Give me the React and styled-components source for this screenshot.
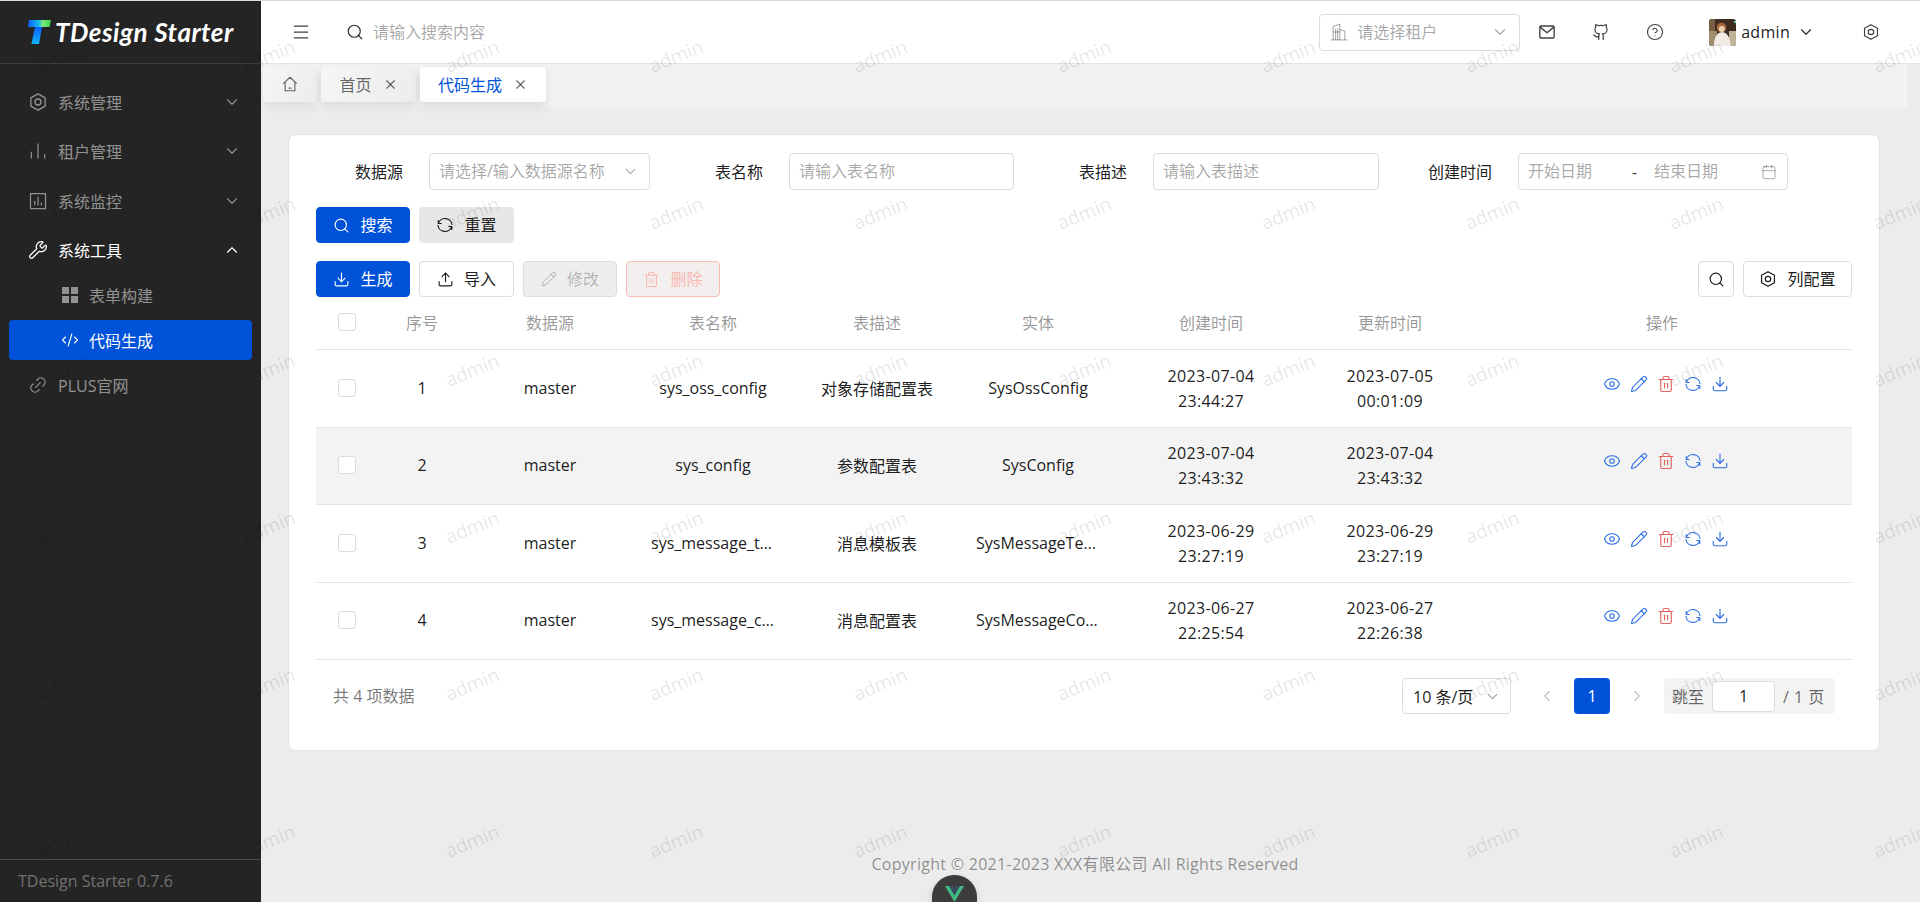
import React from 'react';
import styled, { createGlobalStyle } from 'styled-components';
import {
  Menu as MenuIcon, Search, ChevronDown, ChevronUp, ChevronLeft, ChevronRight, Github, CircleHelp, X,
  Download, Upload, Pencil, Trash2, Eye, CodeXml, Link2, Wrench, Calendar,
} from 'lucide-react';

const GlobalStyle = createGlobalStyle`
  html, body { margin: 0; padding: 0; background: #ececec; }
  body { font-family: "Open Sans", "Noto Sans CJK SC", sans-serif; font-size: 16px; color: rgba(0,0,0,.9); }
  * { box-sizing: border-box; }
`;

const Page = styled.div`
  position: relative; width: 1920px; height: 902px; overflow: hidden; background: #ececec;
  border-top: 1px solid #d9d9d9; display: flex;
`;

const Watermarks = styled.div`
  position: absolute; top: -24px; left: -38px; z-index: 20; pointer-events: none;
  display: grid; grid-template-columns: repeat(10, 204px); grid-auto-rows: 157px;
`;
const Mark = styled.span`
  display: flex; align-items: center; justify-content: center;
  font-size: 19px; color: rgba(0,0,0,.11); transform: rotate(-22deg);
`;

/* sidebar */
const Sidebar = styled.aside`
  width: 261px; flex: none; background: #242424; display: flex; flex-direction: column; color: rgba(255,255,255,.5);
`;
const LogoBar = styled.div`
  height: 63px; flex: none; border-bottom: 1px solid #3d3d3d; display: flex; align-items: center; padding: 0 0 0 27px; gap: 4px;
`;
const LogoText = styled.span`
  font-family: "Lato", sans-serif; font-style: italic; font-weight: 700; font-size: 26px; color: #fff; white-space: nowrap; letter-spacing: .5px;
`;
const Nav = styled.nav`
  flex: 1; padding-top: 12.8px; display: flex; flex-direction: column;
`;
const TopItem = styled.div`
  height: 49.6px; flex: none; display: flex; align-items: center; padding: 0 20px 0 28px; gap: 10px; font-size: 16px;
  color: ${p => (p.$open ? '#fff' : 'rgba(255,255,255,.5)')};
  span { flex: 1; }
`;
const SubItem = styled.div`
  height: 40px; flex: none; margin: ${p => (p.$active ? '5px 9px 0' : '0 9px')}; padding-left: 52px; display: flex; align-items: center; gap: 10px;
  border-radius: 4px; background: ${p => (p.$active ? '#0052d9' : 'transparent')};
  color: ${p => (p.$active ? '#fff' : 'rgba(255,255,255,.5)')};
`;
const SideFooter = styled.div`
  height: 43px; flex: none; border-top: 1px solid #4a4a4a; display: flex; align-items: center; padding-left: 18px; font-size: 16px; color: rgba(255,255,255,.36);
`;

/* main column */
const Main = styled.main`
  flex: 1; min-width: 0; display: flex; flex-direction: column;
`;
const Header = styled.header`
  height: 63px; flex: none; background: #fff; border-bottom: 1px solid #e4e4e4; display: flex; align-items: center; padding: 0 22px 0 18px;
`;
const IconButton = styled.div`
  width: 54px; height: 36px; flex: none; display: flex; align-items: center; justify-content: center; color: rgba(0,0,0,.75);
`;
const MenuToggle = styled(IconButton)`
  width: 44px;
`;
const SettingsButton = styled(IconButton)`
  margin-left: 29px;
`;
const SearchBox = styled.div`
  display: flex; align-items: center; gap: 9px; margin-left: 23px; flex: 1; color: rgba(0,0,0,.8);
`;
const PlainInput = styled.input`
  border: 0; outline: 0; background: transparent; padding: 0; flex: ${p => (p.$w ? 'none' : 1)}; width: ${p => (p.$w ? `${p.$w}px` : 'auto')}; min-width: 0; font: inherit; font-size: 16px; color: rgba(0,0,0,.9);
  &::placeholder { color: rgba(0,0,0,.36); opacity: 1; }
`;
const Field = styled.div`
  width: ${p => p.$w}px; height: 37px; flex: none; display: flex; align-items: center; gap: 8px; padding: 0 10px 0 9px;
  border: 1px solid #dcdcdc; border-radius: 4px; background: #fff; color: rgba(0,0,0,.36);
`;
const Dash = styled.span`
  width: 14px; flex: none; color: rgba(0,0,0,.8);
`;
const User = styled.div`
  display: flex; align-items: center; margin-left: 27px; gap: 5px; font-size: 16px; letter-spacing: .3px; color: rgba(0,0,0,.9);
`;
const Chevron = styled.span`
  display: flex; margin-left: 2px; color: rgba(0,0,0,.8);
`;

const TabBar = styled.div`
  height: 43px; flex: none; margin-right: 13px; background: #f2f2f2; display: flex; align-items: flex-start; padding: 3px 0 0 2px; gap: 4px;
`;
const Tab = styled.div`
  height: 35px; width: ${p => p.$w}px; padding-bottom: 1px; display: flex; align-items: center; justify-content: center; gap: 11px; border-radius: 3px;
  background: ${p => (p.$active ? '#fff' : 'linear-gradient(120deg, #f6f6f6, #ececec)')};
  color: ${p => (p.$active ? '#0052d9' : 'rgba(0,0,0,.6)')};
  box-shadow: 0 4px 9px rgba(0,0,0,.1);
  svg.close { color: rgba(0,0,0,.6); }
`;

const Content = styled.div`
  flex: 1; padding: 27px 40px 0 27px; display: flex; flex-direction: column;
`;
const Card = styled.section`
  height: 617px; flex: none; background: #fff; border: 1px solid #e3e3e3; border-radius: 8px; padding: 18px 27px 0;
`;
const FormRow = styled.div`
  display: flex; gap: 26px;
  input { padding-bottom: 2px; }
`;
const FormItem = styled.div`
  display: flex; align-items: center;
`;
const Label = styled.label`
  width: 113px; padding: 0 26px 2px 0; text-align: right; font-size: 16px; color: rgba(0,0,0,.9);
`;
const Toolbar = styled.div`
  display: flex; gap: 9px; margin-top: ${p => p.$mt}px;
`;
const Spacer = styled.div`flex: 1;`;
const variants = {
  primary: 'background:#0052d9;border-color:#0052d9;color:#fff;',
  gray: 'background:#e7e7e7;border-color:#e7e7e7;color:rgba(0,0,0,.9);',
  outline: 'background:#fff;border-color:#dcdcdc;color:rgba(0,0,0,.9);',
  disabled: 'background:#eee;border-color:#dcdcdc;color:rgba(0,0,0,.26);',
  dangerOff: 'background:#f3efee;border-color:#fbbcb6;color:#f9b7b1;',
};
const Button = styled.button`
  height: 36px; width: ${p => p.$w || 94}px; flex: none; border: 1px solid; border-radius: 4px; padding: 0 0 2px; display: flex; align-items: center; justify-content: center; gap: 10px;
  font: inherit; font-size: 16px;
  svg { position: relative; top: 1px; }
  ${p => variants[p.$v]}
`;

const columns = '62px 88px 168px 158px 170px 152px 194px 164px 1fr';
const Grid = styled.div`
  display: grid; grid-template-columns: ${columns}; align-items: center; border-bottom: 1px solid #e3e3e3; text-align: center;
`;
const HeadRow = styled(Grid)`
  height: 53px; padding-bottom: 2px; color: rgba(0,0,0,.42); font-size: 16px;
`;
const Row = styled(Grid)`
  height: 77.5px; padding-bottom: 1px; background: ${p => (p.$striped ? '#f3f3f3' : '#fff')}; font-size: 16px;
`;
const Cell = styled.div`
  min-width: 0; padding: 0 ${p => p.$pad || 0}px; overflow: hidden; white-space: nowrap; text-overflow: ellipsis;
`;
const DateCell = styled.div`
  line-height: 25px; white-space: pre-line; padding-top: 2px; letter-spacing: .35px;
`;
const CheckBox = styled.span`
  display: block; width: 18px; height: 18px; margin: 0 auto; border: 1px solid #dcdcdc; border-radius: 3px; background: #fff;
`;
const Actions = styled.div`
  display: flex; justify-content: center; gap: 9px; padding: 0 0 8px 8px; color: #2f72e4;
`;
const DangerIcon = styled.span`
  display: flex; color: #e0625c;
`;
const Pager = styled.div`
  display: flex; align-items: center; gap: 9px; padding: 18px 17px 0;
`;
const Total = styled.span`
  flex: 1; padding-bottom: 2px; color: rgba(0,0,0,.55); font-size: 16px;
`;
const SizeSelect = styled.div`
  width: 109px; height: 36px; margin-right: 9px; display: flex; align-items: center; justify-content: space-between; padding: 0 9px 0 10px;
  border: 1px solid #dcdcdc; border-radius: 4px; font-size: 16px; white-space: nowrap;
  svg { color: rgba(0,0,0,.4); }
`;
const PageArrow = styled.span`
  width: 36px; height: 36px; display: flex; align-items: center; justify-content: center; color: rgba(0,0,0,.26);
`;
const PageNum = styled.span`
  width: 36px; height: 36px; display: flex; align-items: center; justify-content: center; background: #0052d9; color: #fff; border-radius: 4px;
`;
const Jump = styled.div`
  width: 171px; height: 36px; display: flex; align-items: center; gap: 8px; padding: 0 0 0 8px; background: #f3f3f3; border-radius: 4px; color: rgba(0,0,0,.6); white-space: nowrap; word-spacing: 1px;
`;
const JumpInput = styled.input`
  width: 63px; height: 31px; flex: none; border: 1px solid #dcdcdc; border-radius: 4px; background: #fff; outline: 0; text-align: center; font: inherit; color: rgba(0,0,0,.9); padding: 0;
`;
const Copyright = styled.footer`
  margin-top: 102px; text-align: center; color: rgba(0,0,0,.42); font-size: 16px; line-height: 22px; padding-left: 2px; letter-spacing: .28px;
`;
const DevTools = styled.div`
  position: absolute; left: 932px; top: 874px; width: 45px; height: 60px; border-radius: 22px; background: #3c3c3c; z-index: 30;
  display: flex; justify-content: center; padding-top: 11px; box-shadow: 0 2px 6px rgba(0,0,0,.15);
`;

/* drawings */
const Svg = ({ s = 18, children, sw = 1.6 }) => (
  <svg width={s} height={s} viewBox="0 0 24 24" fill="none" stroke="currentColor" strokeWidth={sw} strokeLinecap="butt" strokeLinejoin="round" style={{ flex: 'none' }}>{children}</svg>
);
const Hex = ({ s = 18, sw = 1.6 }) => (
  <Svg s={s} sw={sw}><path d="M12 2.2 20.6 7.1v9.8L12 21.8 3.4 16.9V7.1Z" /><circle cx="12" cy="12" r="3.6" /></Svg>
);
const Bars = () => (
  <Svg s={20} sw={1.5}><path d="M4 13v8M12 3v18M20 16v5" /></Svg>
);
const Monitor = () => (
  <Svg s={20} sw={1.5}><rect x="3" y="3" width="18" height="18" /><path d="M8 17v-5M12 17V7M16 17v-3" /></Svg>
);
const Modules = () => (
  <svg width="18" height="18" viewBox="0 0 18 18" fill="currentColor" style={{ flex: 'none' }}>
    <rect x="1" y="1" width="7" height="7" /><rect x="10" y="1" width="7" height="7" /><rect x="1" y="10" width="7" height="7" /><rect x="10" y="10" width="7" height="7" />
  </svg>
);
const Building = () => (
  <Svg s={20} sw={1.2}><path d="M2 21.500h20M5 21.500V5.500L13 2.500v19M13 9l6 2v10.500M8 8v13.500M10.500 8v13.500" /><path d="M5 12h8" /></Svg>
);
const Envelope = () => (
  <Svg s={18} sw={1.8}><rect x="2.500" y="4" width="19" height="16" rx="1.500" /><path d="M3 5.500 12 13l9-7.500" /></Svg>
);
const HomeIcon = () => (
  <Svg s={18} sw={1.5}><path d="M3 11.500 12 3l9 8.500M5.500 9.500V21h13V9.500M10 17.500h4" /></Svg>
);
const Refresh = ({ s = 18, sw = 1.5 }) => (
  <Svg s={s} sw={sw}>
    <path d="M3 5.500V10h4.500M3 10a9.500 9.500 0 0 1 18.500 2" />
    <path d="M21 18.500V14h-4.500M21 14a9.500 9.500 0 0 1-18.500-2" />
  </Svg>
);
const Logo = () => (
  <svg width="24" height="26" viewBox="0 0 24 26" style={{ flex: 'none' }}>
    <defs>
      <linearGradient id="lg1" x1="0" y1="0" x2="1" y2="0"><stop offset="0" stopColor="#0a5cff" /><stop offset=".45" stopColor="#12b8f0" /><stop offset=".65" stopColor="#7fe87c" /><stop offset="1" stopColor="#35d24a" /></linearGradient>
      <linearGradient id="lg2" x1="0" y1="0" x2="0" y2="1"><stop offset="0" stopColor="#0a5cff" /><stop offset="1" stopColor="#10b8ff" /></linearGradient>
    </defs>
    <path d="M2 1h22l-1.400 7H1Z" fill="url(#lg1)" />
    <path d="M8 8h7l-3 17H4.400Z" fill="url(#lg2)" />
  </svg>
);
const Avatar = () => (
  <svg width="27" height="27" viewBox="0 0 27 27" style={{ flex: 'none', borderRadius: 3 }}>
    <rect width="27" height="27" fill="#3e2c22" />
    <rect y="0" width="6" height="12" fill="#7a5e44" />
    <rect y="12" width="8" height="15" fill="#a08f70" />
    <rect x="20" y="12" width="7" height="15" fill="#bfb39a" />
    <rect x="25" y="2" width="2" height="2" fill="#5fd8c0" />
    <path d="M5 27c0-9 3.500-14 8-14s8.500 5 8.500 14Z" fill="#f1ede6" />
    <circle cx="12.500" cy="8.500" r="4.800" fill="#a8683a" />
    <circle cx="12.800" cy="10" r="3" fill="#efcfb6" />
  </svg>
);
const VueMark = () => (
  <svg width="19" height="16" viewBox="0 0 24 20">
    <path d="M0 0h9l3 5 3-5h9L12 20Z" fill="#42b883" />
    <path d="M5 0h4l3 5 3-5h4L12 12Z" fill="#35495e" />
  </svg>
);

const rows = [
  ['1', 'sys_oss_config', '对象存储配置表', 'SysOssConfig', '2023-07-04\n23:44:27', '2023-07-05\n00:01:09'],
  ['2', 'sys_config', '参数配置表', 'SysConfig', '2023-07-04\n23:43:32', '2023-07-04\n23:43:32'],
  ['3', 'sys_message_template', '消息模板表', 'SysMessageTemplate', '2023-06-29\n23:27:19', '2023-06-29\n23:27:19'],
  ['4', 'sys_message_config', '消息配置表', 'SysMessageConfig', '2023-06-27\n22:25:54', '2023-06-27\n22:26:38'],
];

export default function App() {
  const ic = { size: 18, strokeWidth: 1.5 };
  return (
    <Page>
      <GlobalStyle />
      <Sidebar>
        <LogoBar><Logo /><LogoText>TDesign Starter</LogoText></LogoBar>
        <Nav>
          <TopItem><Hex s={20} /><span>系统管理</span><ChevronDown {...ic} /></TopItem>
          <TopItem><Bars /><span>租户管理</span><ChevronDown {...ic} /></TopItem>
          <TopItem><Monitor /><span>系统监控</span><ChevronDown {...ic} /></TopItem>
          <TopItem $open><Wrench size={20} strokeWidth={1.5} /><span>系统工具</span><ChevronUp {...ic} /></TopItem>
          <SubItem><Modules /><span>表单构建</span></SubItem>
          <SubItem $active><CodeXml size={18} strokeWidth={1.5} /><span>代码生成</span></SubItem>
          <TopItem><Link2 size={20} strokeWidth={1.5} style={{ transform: 'rotate(-45deg)' }} /><span>PLUS官网</span></TopItem>
        </Nav>
        <SideFooter>TDesign Starter 0.7.6</SideFooter>
      </Sidebar>
      <Main>
        <Header>
          <MenuToggle><MenuIcon size={20} strokeWidth={1.5} /></MenuToggle>
          <SearchBox><Search size={18} strokeWidth={1.6} /><PlainInput placeholder="请输入搜索内容" /></SearchBox>
          <Field $w={201}><Building /><PlainInput placeholder="请选择租户" /><ChevronDown {...ic} /></Field>
          <IconButton><Envelope /></IconButton>
          <IconButton><Github size={18} strokeWidth={1.6} /></IconButton>
          <IconButton><CircleHelp size={18} strokeWidth={1.5} /></IconButton>
          <User><Avatar />admin<Chevron><ChevronDown size={18} strokeWidth={1.7} /></Chevron></User>
          <SettingsButton><Hex s={18} /></SettingsButton>
        </Header>
        <TabBar>
          <Tab $w={54}><HomeIcon /></Tab>
          <Tab $w={95}>首页<X className="close" size={15} strokeWidth={1.8} /></Tab>
          <Tab $w={126} $active>代码生成<X className="close" size={15} strokeWidth={1.8} /></Tab>
        </TabBar>
        <Content>
          <Card>
            <FormRow>
              <FormItem><Label>数据源</Label><Field $w={221}><PlainInput placeholder="请选择/输入数据源名称" /><ChevronDown size={17} strokeWidth={1.5} /></Field></FormItem>
              <FormItem><Label>表名称</Label><Field $w={225}><PlainInput placeholder="请输入表名称" /></Field></FormItem>
              <FormItem><Label>表描述</Label><Field $w={226}><PlainInput placeholder="请输入表描述" /></Field></FormItem>
              <FormItem><Label>创建时间</Label><Field $w={270}><PlainInput $w={96} placeholder="开始日期" /><Dash>-</Dash><PlainInput placeholder="结束日期" /><Calendar size={16} strokeWidth={1.4} /></Field></FormItem>
            </FormRow>
            <Toolbar $mt={17}>
              <Button $v="primary"><Search size={17} strokeWidth={1.6} />搜索</Button>
              <Button $v="gray" $w={95}><Refresh />重置</Button>
            </Toolbar>
            <Toolbar $mt={18}>
              <Button $v="primary"><Download size={17} strokeWidth={1.6} />生成</Button>
              <Button $v="outline" $w={95}><Upload size={17} strokeWidth={1.6} />导入</Button>
              <Button $v="disabled"><Pencil size={16} strokeWidth={1.5} />修改</Button>
              <Button $v="dangerOff"><Trash2 size={17} strokeWidth={1.5} />删除</Button>
              <Spacer />
              <Button $v="outline" $w={36}><Search size={17} strokeWidth={1.6} /></Button>
              <Button $v="outline" $w={109}><Hex s={18} />列配置</Button>
            </Toolbar>
            <HeadRow>
              <CheckBox />
              <Cell>序号</Cell><Cell>数据源</Cell><Cell>表名称</Cell><Cell>表描述</Cell><Cell>实体</Cell><Cell>创建时间</Cell><Cell>更新时间</Cell><Cell>操作</Cell>
            </HeadRow>
            {rows.map((r, i) => (
              <Row key={r[0]} $striped={i === 1}>
                <CheckBox />
                <Cell>{r[0]}</Cell>
                <Cell>master</Cell>
                <Cell $pad={17}>{r[1]}</Cell>
                <Cell>{r[2]}</Cell>
                <Cell $pad={14}>{r[3]}</Cell>
                <DateCell>{r[4]}</DateCell>
                <DateCell>{r[5]}</DateCell>
                <Actions>
                  <Eye size={18} strokeWidth={1.5} />
                  <Pencil size={18} strokeWidth={1.5} />
                  <DangerIcon><Trash2 size={18} strokeWidth={1.5} /></DangerIcon>
                  <Refresh s={18} />
                  <Download size={18} strokeWidth={1.5} />
                </Actions>
              </Row>
            ))}
            <Pager>
              <Total>共 4 项数据</Total>
              <SizeSelect>10 条/页<ChevronDown size={17} strokeWidth={1.5} /></SizeSelect>
              <PageArrow><ChevronLeft size={18} strokeWidth={1.5} /></PageArrow>
              <PageNum>1</PageNum>
              <PageArrow><ChevronRight size={18} strokeWidth={1.5} /></PageArrow>
              <Jump>跳至<JumpInput defaultValue="1" />/ 1 页</Jump>
            </Pager>
          </Card>
          <Copyright>Copyright © 2021-2023 XXX有限公司 All Rights Reserved</Copyright>
        </Content>
      </Main>
      <DevTools><VueMark /></DevTools>
      <Watermarks>
        {Array.from({ length: 60 }, (_, i) => <Mark key={i}>admin</Mark>)}
      </Watermarks>
    </Page>
  );
}
